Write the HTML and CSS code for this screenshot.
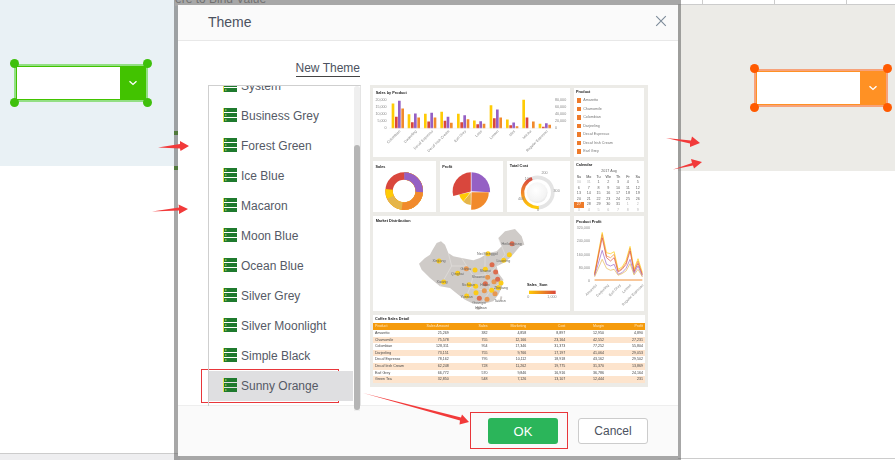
FILE: index.html
```html
<!DOCTYPE html>
<html lang="en">
<head>
<meta charset="utf-8">
<title>Theme</title>
<link rel="stylesheet" href="styles.css">
</head>
<body>
<div class="stage">
  <div class="panel panel-left"></div>
  <div class="panel panel-right"></div>
  <div class="ruler"><i></i><i></i><i></i></div>
  <div class="foot-left"></div>
  <div class="foot-right"></div>
  <span class="peek peek-a"></span>
  <span class="peek peek-b"></span>
  <div class="behind-clip"><span class="behind-text">ere to Bind Value</span></div>

  <div class="combo combo-green">
    <div class="combo-field"></div>
    <div class="combo-btn"><svg width="10" height="6" viewBox="0 0 10 6"><path d="M1.5 1.2 5 4.4l3.5-3.2" fill="none" stroke="#fff" stroke-width="1.4"/></svg></div>
    <span class="h tl"></span><span class="h tr"></span><span class="h bl"></span><span class="h br"></span>
  </div>
  <div class="combo combo-orange">
    <div class="combo-field"></div>
    <div class="combo-btn"><svg width="10" height="6" viewBox="0 0 10 6"><path d="M1.5 1.2 5 4.4l3.5-3.2" fill="none" stroke="#fff" stroke-width="1.4"/></svg></div>
    <span class="h tl"></span><span class="h tr"></span><span class="h bl"></span><span class="h br"></span>
  </div>

  <section class="modal">
    <header class="modal-head">
      <h1 class="modal-title">Theme</h1>
      <svg class="close" width="12" height="12" viewBox="0 0 12 12"><path d="M1.2 1.2l9.6 9.6M10.8 1.2l-9.6 9.6" stroke="#7c8b99" stroke-width="1.1" fill="none"/></svg>
    </header>
    <div class="modal-body">
      <div class="left-col">
        <div class="new-row"><a class="new-theme">New Theme</a></div>
        <div class="list">
          <div class="list-clip">
            <div class="row row-first"><svg class="ic" viewBox="0 0 14 14"><use href="#srv"/></svg>System</div>
            <div class="row"><svg class="ic" viewBox="0 0 14 14"><use href="#srv"/></svg>Business Grey</div>
            <div class="row"><svg class="ic" viewBox="0 0 14 14"><use href="#srv"/></svg>Forest Green</div>
            <div class="row"><svg class="ic" viewBox="0 0 14 14"><use href="#srv"/></svg>Ice Blue</div>
            <div class="row"><svg class="ic" viewBox="0 0 14 14"><use href="#srv"/></svg>Macaron</div>
            <div class="row"><svg class="ic" viewBox="0 0 14 14"><use href="#srv"/></svg>Moon Blue</div>
            <div class="row"><svg class="ic" viewBox="0 0 14 14"><use href="#srv"/></svg>Ocean Blue</div>
            <div class="row"><svg class="ic" viewBox="0 0 14 14"><use href="#srv"/></svg>Silver Grey</div>
            <div class="row"><svg class="ic" viewBox="0 0 14 14"><use href="#srv"/></svg>Silver Moonlight</div>
            <div class="row"><svg class="ic" viewBox="0 0 14 14"><use href="#srv"/></svg>Simple Black</div>
            <div class="row row-sel"><svg class="ic" viewBox="0 0 14 14"><use href="#srv"/></svg>Sunny Orange</div>
          </div>
          <div class="scroll"><div class="thumb"></div></div>
        </div>
      </div>

      <div class="preview">
        <div class="p-row p-row1">
          <div class="card card-main">
            <svg class="fill" viewBox="9 22 591 206">
              <text class="t" x="17" y="40">Sales by Product</text>
              <path fill="#ffcb05" d="M65 68h8V142h-8zM113 100h8V142h-8zM162 99h8V142h-8zM211 93h8V142h-8zM261 99h8V142h-8zM309 119h8V142h-8zM359 73h8V142h-8zM408 116h8V142h-8zM457 57h8V142h-8zM506 129h8V142h-8z"/>
              <path fill="#d9473d" d="M75 108h8V142h-8zM123 124h8V142h-8zM172 122h8V142h-8zM221 120h8V142h-8zM271 124h8V142h-8zM319 130h8V142h-8zM369 112h8V142h-8zM418 133h8V142h-8zM467 110h8V142h-8zM516 138h8V142h-8z"/>
              <path fill="#9560c4" d="M84 60h8V142h-8zM132 98h8V142h-8zM181 96h8V142h-8zM230 108h8V142h-8zM280 103h8V142h-8zM328 121h8V142h-8zM378 86h8V142h-8zM427 125h8V142h-8zM525 127h8V142h-8z"/>
              <path fill="#f18a2c" d="M94 83h8V142h-8zM142 110h8V142h-8zM191 110h8V142h-8zM240 126h8V142h-8zM290 115h8V142h-8zM338 129h8V142h-8zM388 110h8V142h-8zM437 136h8V142h-8zM486 122h8V142h-8zM535 132h8V142h-8z"/>
              <path stroke="#ddd" d="M58 142H548"/>
              <g class="ax" text-anchor="end">
                <text x="50" y="61">20,000</text><text x="50" y="82">15,000</text><text x="50" y="103">10,000</text><text x="50" y="124">5,000</text><text x="50" y="146">0</text>
              </g>
              <g class="ax">
                <text x="555" y="61">80,000</text><text x="555" y="82">60,000</text><text x="555" y="103">40,000</text><text x="555" y="124">20,000</text><text x="555" y="146">0</text>
              </g>
              <g class="ax" text-anchor="end">
                <text transform="translate(92 152) rotate(-45)">Colombian</text>
                <text transform="translate(141 152) rotate(-45)">Darjeeling</text>
                <text transform="translate(190 152) rotate(-45)">Decaf Espresso</text>
                <text transform="translate(239 152) rotate(-45)">Decaf Irish Cream</text>
                <text transform="translate(289 152) rotate(-45)">Earl Grey</text>
                <text transform="translate(337 152) rotate(-45)">Latte</text>
                <text transform="translate(387 152) rotate(-45)">Lemon</text>
                <text transform="translate(436 152) rotate(-45)">Mint</text>
                <text transform="translate(485 152) rotate(-45)">Mocha</text>
                <text transform="translate(534 152) rotate(-45)">Regular Espresso</text>
              </g>
            </svg>
          </div>
          <div class="card card-side">
            <div class="c-title">Product</div>
            <div class="chk"><i></i>Amaretto</div>
            <div class="chk"><i></i>Chamomile</div>
            <div class="chk"><i></i>Colombian</div>
            <div class="chk"><i></i>Darjeeling</div>
            <div class="chk"><i></i>Decaf Espresso</div>
            <div class="chk"><i></i>Decaf Irish Cream</div>
            <div class="chk"><i></i>Earl Grey</div>
          </div>
        </div>

        <div class="p-row p-row2">
          <div class="p-trio">
            <div class="card card-grow">
              <svg class="fill" viewBox="9 240 194 152">
                <text class="t" x="17" y="260">Sales</text>
                <g fill="none" stroke-width="23" transform="rotate(-90 105 330)">
                  <circle cx="105" cy="330" r="46.5" pathLength="100" stroke="#d9473d"/>
                  <circle cx="105" cy="330" r="46.5" pathLength="100" stroke="#ffcb05" stroke-dasharray="76.5 100"/>
                  <circle cx="105" cy="330" r="46.5" pathLength="100" stroke="#e5b54a" stroke-dasharray="68 100"/>
                  <circle cx="105" cy="330" r="46.5" pathLength="100" stroke="#f18a2c" stroke-dasharray="52 100"/>
                  <circle cx="105" cy="330" r="46.5" pathLength="100" stroke="#9560c4" stroke-dasharray="26 100"/>
                </g>
              </svg>
            </div>
            <div class="card card-grow">
              <svg class="fill" viewBox="215 240 190 152">
                <text class="t" x="222" y="260">Profit</text>
                <path fill="#9560c4" d="M310 330V273A57 57 0 0 1 366 333Z"/>
                <path fill="#f18a2c" d="M310 333H362A52 52 0 0 1 309 386Z"/>
                <path fill="#e5b54a" d="M308 334V372A38 38 0 0 1 285 362Z"/>
                <path fill="#ffcb05" d="M307 333 285 361A38 38 0 0 1 273 340Z"/>
                <path fill="#d9473d" d="M308 331 255 345A57 57 0 0 1 308 273Z"/>
              </svg>
            </div>
            <div class="card card-grow">
              <svg class="fill" viewBox="418 240 182 152">
                <defs>
                  <radialGradient id="gk" cx=".45" cy=".4" r=".7"><stop offset="0" stop-color="#fff"/><stop offset=".7" stop-color="#f4f4f4"/><stop offset="1" stop-color="#dcdcdc"/></radialGradient>
                  <linearGradient id="gy" x1="0" y1="0" x2="0" y2="1"><stop offset="0" stop-color="#d9473d"/><stop offset=".5" stop-color="#f18a2c"/><stop offset="1" stop-color="#ffcb05"/></linearGradient>
                </defs>
                <text class="t" x="423" y="257">Total Cost</text>
                <path d="M490 292A45 45 0 1 1 510 378.700" fill="none" stroke="#e4e4e4" stroke-width="11"/>
                <path d="M490 292A45 45 0 0 0 510 378.700" fill="none" stroke="url(#gy)" stroke-width="10"/>
                <circle cx="505" cy="334" r="31" fill="url(#gk)"/>
                <g class="ax" text-anchor="middle"><text x="477" y="298">100</text><text x="527" y="280">200</text><text x="563" y="331">300</text><text x="457" y="356">400</text><text x="508" y="390">0</text></g>
              </svg>
            </div>
          </div>
          <div class="card card-side">
            <div class="c-title">Calendar</div>
            <div class="cal-month">2017 Aug</div>
            <div class="cal">
              <b>Su</b><b>Mo</b><b>Tu</b><b>We</b><b>Th</b><b>Fr</b><b>Sa</b>
              <s>30</s><s>31</s><span>1</span><span>2</span><span>3</span><span>4</span><span>5</span>
              <span>6</span><span>7</span><span>8</span><span>9</span><span>10</span><span>11</span><span>12</span>
              <span>13</span><span>14</span><span>15</span><span>16</span><span>17</span><span>18</span><span>19</span>
              <span>20</span><span>21</span><span>22</span><span>23</span><span>24</span><span>25</span><span>26</span>
              <span class="cal-on">27</span><span>28</span><span>29</span><span>30</span><span>31</span><s>1</s><s>2</s>
              <s>3</s><s>4</s><s>5</s><s>6</s><s>7</s><s>8</s><s>9</s>
            </div>
          </div>
        </div>

        <div class="p-row p-row3">
          <div class="card card-main">
            <svg class="fill" viewBox="9 15 591 285">
              <defs><linearGradient id="lg"><stop offset="0" stop-color="#ffcb05"/><stop offset="1" stop-color="#d9473d"/></linearGradient></defs>
              <text class="t" x="17" y="34">Market Distribution</text>
              <path fill="#cfcbc8" d="M147 158 165 141 180 131 187 118 200 96 213 91 225 101 235 126 250 136 275 141 310 148 330 141 355 126 380 121 395 106 385 81 405 61 435 54 455 76 463 101 450 106 433 126 420 141 400 156 380 166 385 186 400 206 395 231 385 251 370 271 350 276 325 276 305 276 285 266 265 251 240 231 210 226 180 201 155 176Z"/>
              <path fill="#cfcbc8" d="M318 288l14-3 4 6-10 6-9-3zM392 255l5 2-3 14-5-5z"/>
              <path fill="none" stroke="#e8e6e4" stroke-width="1.500" d="M235 126 245 165 210 226M245 165 290 165 275 141M290 165 310 195 300 230 285 266M310 195 355 190 380 166M345 135 345 190M355 190 360 240 335 276M300 230 360 240 400 206M385 81 405 130 380 166"/>
              <g fill="#ffcb05" fill-opacity=".9">
                <circle cx="354" cy="128" r="7.500"/><circle cx="418" cy="131" r="7.500"/><circle cx="401" cy="148" r="7.500"/><circle cx="207" cy="150" r="7.500"/>
                <circle cx="315" cy="177" r="7.500"/><circle cx="346" cy="175" r="7.500"/><circle cx="263" cy="187" r="7.500"/><circle cx="221" cy="213" r="7.500"/>
                <circle cx="393" cy="216" r="7.500"/><circle cx="297" cy="221" r="7.500"/><circle cx="317" cy="226" r="7.500"/><circle cx="385" cy="230" r="7.500"/>
                <circle cx="365" cy="238" r="7.500"/><circle cx="318" cy="245" r="7.500"/><circle cx="290" cy="255" r="7.500"/>
              </g>
              <g fill="#e8944a" fill-opacity=".95">
                <circle cx="289" cy="173" r="7.500"/><circle cx="353" cy="199" r="7.500"/><circle cx="343" cy="239" r="7.500"/><circle cx="375" cy="248" r="7.500"/><circle cx="351" cy="265" r="7.500"/><circle cx="372" cy="212" r="7.500"/>
              </g>
              <g fill="#dc6648" fill-opacity=".95">
                <circle cx="426" cy="98" r="7.500"/><circle cx="366" cy="161" r="7.500"/><circle cx="377" cy="183" r="7.500"/><circle cx="383" cy="205" r="7.500"/><circle cx="346" cy="218" r="7.500"/><circle cx="328" cy="262" r="7.500"/>
              </g>
              <g class="ax dark" text-anchor="middle">
                <text x="425" y="103">Heilongjiang</text><text x="352" y="132">Nei Menggol</text><text x="400" y="152">Liaoning</text><text x="207" y="154">Xinjiang</text>
                <text x="288" y="177">Gansu</text><text x="262" y="192">Qinghai</text><text x="346" y="182">Shanxi</text><text x="325" y="202">Shaanxi</text>
                <text x="216" y="217">Xizang</text><text x="295" y="225">Sichuan</text><text x="345" y="226">Hubei</text><text x="393" y="233">Zhejiang</text>
                <text x="290" y="262">Yunnan</text><text x="327" y="279">Guangxi</text><text x="390" y="272">Taiwan</text><text x="333" y="294">Hainan</text>
              </g>
              <text class="t" x="471" y="225">Sales_Sum</text>
              <rect x="477" y="239" width="80" height="10" fill="url(#lg)"/>
              <g class="ax"><text x="472" y="261">0</text><text x="532" y="261">1,000</text></g>
            </svg>
          </div>
          <div class="card card-side">
            <svg class="fill" viewBox="612 15 211 285">
              <text class="t" x="619" y="34">Product Profit</text>
              <g class="ax" text-anchor="end">
                <text x="660" y="54">320,000</text><text x="660" y="94">240,000</text><text x="660" y="134">160,000</text><text x="660" y="174">80,000</text><text x="660" y="214">0</text>
              </g>
              <path d="M674 207H818" stroke="#f8c79a" stroke-width="6"/>
              <g fill="none" stroke-width="2">
                <polyline stroke="#ffcb05" points="674,187 697,64 710,125 722,128 733,122 745,175 757,168 769,148 781,106 793,175 805,143 818,185"/>
                <polyline stroke="#f18a2c" points="674,190 697,70 710,135 722,140 733,130 745,180 757,172 769,155 781,112 793,180 805,150 818,190"/>
                <polyline stroke="#d9473d" points="674,192 697,80 710,140 722,150 733,140 745,183 757,175 769,160 781,120 793,183 805,157 818,192"/>
                <polyline stroke="#9560c4" points="674,195 697,118 710,160 722,165 733,160 745,190 757,185 769,172 781,145 793,188 805,165 818,196"/>
                <polyline stroke="#e5b54a" points="674,198 697,145 710,172 722,178 733,175 745,193 757,188 769,180 781,158 793,192 805,175 818,198"/>
              </g>
              <g class="ax" text-anchor="end">
                <text transform="translate(682 224) rotate(-45)">Amaretto</text>
                <text transform="translate(718 224) rotate(-45)">Darjeeling</text>
                <text transform="translate(754 224) rotate(-45)">Earl Grey</text>
                <text transform="translate(785 224) rotate(-45)">Lemon</text>
                <text transform="translate(822 224) rotate(-45)">Regular Espresso</text>
              </g>
            </svg>
          </div>
        </div>

        <div class="card card-table">
          <div class="c-title c-title-t">Coffee Sales Detail</div>
          <table class="tbl">
            <thead><tr><th>Product</th><th>Sales Amount</th><th>Sales</th><th>Marketing</th><th>Cost</th><th>Margin</th><th>Profit</th></tr></thead>
            <tbody>
              <tr><td>Amaretto</td><td>25,269</td><td>382</td><td>4,858</td><td>8,897</td><td>12,950</td><td>4,890</td></tr>
              <tr><td>Chamomile</td><td>75,578</td><td>755</td><td>12,166</td><td>23,164</td><td>42,552</td><td>27,231</td></tr>
              <tr><td>Colombian</td><td>128,311</td><td>954</td><td>17,346</td><td>31,373</td><td>77,252</td><td>55,804</td></tr>
              <tr><td>Darjeeling</td><td>73,151</td><td>755</td><td>9,766</td><td>17,197</td><td>41,064</td><td>29,053</td></tr>
              <tr><td>Decaf Espresso</td><td>78,162</td><td>795</td><td>10,112</td><td>18,918</td><td>43,162</td><td>29,502</td></tr>
              <tr><td>Decaf Irish Cream</td><td>62,248</td><td>728</td><td>11,262</td><td>19,775</td><td>31,370</td><td>13,869</td></tr>
              <tr><td>Earl Grey</td><td>66,772</td><td>570</td><td>9,846</td><td>16,916</td><td>36,786</td><td>24,164</td></tr>
              <tr><td>Green Tea</td><td>32,850</td><td>548</td><td>7,126</td><td>13,107</td><td>12,444</td><td>231</td></tr>
            </tbody>
          </table>
        </div>
      </div>
    </div>
    <footer class="modal-foot">
      <button class="btn btn-ok">OK</button>
      <button class="btn btn-cancel">Cancel</button>
    </footer>
  </section>

  <svg class="marks" width="895" height="460" viewBox="0 0 895 460">
    <defs>
      <g id="srv">
        <path fill="#e6e24e" d="M0 0h1v14H0z"/>
        <path fill="#1f7a2e" d="M1 0h13v4H1zM1 5h13v4H1zM1 10h13v4H1z"/>
        <path fill="#e6e24e" d="M2 1.500h1.500v1H2zM2 6.500h1.500v1H2zM2 11.500h1.500v1H2z"/>
      </g>
    </defs>
    <g fill="#f23a3a">
      <path d="M158 147.500 180 144 180 141 189 146 180.500 151 180 148.500Z"/>
      <path d="M152 211.500 179 207.500 178.500 204.500 188 209 179 214 179 210.500Z"/>
      <path d="M666 138 691 140.500 692 136.500 700 143 690 147 690 143.500Z"/>
      <path d="M673 169.500 692 163 691 159 702 162 694 168.500 693 165.500Z"/>
      <path d="M363 393 461 417.500 462 414.500 469 422 459.500 424.500 460 420.500Z"/>
    </g>
    <g fill="none" stroke="#e8363a">
      <rect x="201.500" y="369.500" width="137" height="33"/>
      <rect x="470.500" y="412.500" width="97" height="36"/>
    </g>
  </svg>
</div>
</body>
</html>
```

FILE: styles.css
```css
* { box-sizing: border-box; }
html, body { margin: 0; padding: 0; background: #fff; }
body { font-family: "Liberation Sans", Arial, sans-serif; color: #555a66; }

.stage { position: relative; width: 895px; height: 460px; overflow: hidden; background: #fff; }

.panel { position: absolute; }
.panel-left { left: 0; top: 0; width: 180px; height: 166px; background: #e9f1f5; }
.panel-right { left: 678px; top: 5px; width: 217px; height: 166px; background: #ecebe7; }
.ruler { position: absolute; left: 678px; top: 0; width: 217px; height: 5px; border-bottom: 1px solid #ccc; }
.ruler i { position: absolute; top: 0; width: 1px; height: 4px; background: #ccc; }
.ruler i:nth-child(1) { left: 24px; }
.ruler i:nth-child(2) { left: 96px; }
.ruler i:nth-child(3) { left: 168px; }
.foot-left { position: absolute; left: 0; top: 453px; width: 180px; height: 7px; background: #eeeef0; border-top: 1px solid #ccc; }
.foot-right { position: absolute; left: 678px; top: 458px; width: 217px; height: 1px; background: #ccc; }
.peek { position: absolute; left: 174px; width: 5px; height: 4px; background: #3f9a10; }
.peek-a { top: 131px; }
.peek-b { top: 166px; }
.behind-clip { position: absolute; left: 175px; top: 0; width: 110px; height: 6px; overflow: hidden; background: #fff; }
.behind-text { display: block; margin-top: -8px; font-size: 12px; line-height: 14px; color: #888; white-space: nowrap; }

.combo { position: absolute; display: flex; width: 134px; height: 38px; border: 2px solid; }
.combo-field { flex: 1; background: #fff; border: 1px solid; border-right: 0; }
.combo-btn { width: 26px; display: flex; align-items: center; justify-content: center; }
.combo-green { left: 14px; top: 64px; border-color: #93df84; }
.combo-green .combo-field { border-color: #42c300; }
.combo-green .combo-btn { background: #42c300; }
.combo-green .h { background: #3fc00c; }
.combo-orange { left: 754px; top: 69px; border-color: #f7a27a; }
.combo-orange .combo-field { border-color: #ff9124; }
.combo-orange .combo-btn { background: #ff9124; }
.combo-orange .h { background: #ff5a00; }
.h { position: absolute; width: 9px; height: 9px; border-radius: 50%; }
.tl { left: -6px; top: -7px; }
.tr { right: -6px; top: -7px; }
.bl { left: -6px; bottom: -7px; }
.br { right: -6px; bottom: -7px; }

.modal {
  position: absolute; left: 174px; top: 0; width: 507px; height: 460px;
  display: flex; flex-direction: column;
  border-style: solid; border-width: 5px 3px 4px 4px;
  border-color: rgba(95, 95, 95, .55);
  background: #fff; background-clip: padding-box;
}
.modal-head {
  height: 36px; flex: none; display: flex; align-items: center; justify-content: space-between;
  padding: 0 11px 1px 30px; background: #fafafa; border-bottom: 1px solid #e8e8e8;
}
.modal-title { margin: 0; font-size: 14px; font-weight: 400; color: #4c5260; }
.close { display: block; margin-top: -2px; }

.modal-body { flex: 1; min-height: 0; display: flex; gap: 9px; padding-left: 30px; }
.left-col { width: 153px; display: flex; flex-direction: column; }
.new-row { height: 44px; padding-top: 20px; padding-right: 1px; display: flex; justify-content: flex-end; align-items: flex-start; }
.new-theme { font-size: 12px; line-height: 14px; color: #4c5260; border-bottom: 1px solid #444; padding-bottom: 1px; }

.list { position: relative; flex: 1; min-height: 0; display: flex; border: 1px solid #cfcfcf; border-bottom: 0; border-right-color: #e4e4e4; }
.list-clip { width: 144px; overflow: hidden; }
.row { height: 30px; display: flex; align-items: center; gap: 4px; padding-left: 14px; font-size: 12px; white-space: nowrap; }
.row-first { margin-top: -15px; }
.row-sel { background: #dfdfe1; }
.ic { width: 14px; height: 14px; flex: none; margin-bottom: 2px; }
.scroll { position: absolute; left: 145px; top: 0; width: 6px; height: 325px; background: #efefef; border-radius: 3px 3px 0 0; }
.thumb { position: absolute; left: 0; top: 59px; width: 6px; height: 265px; background: #b5b5b5; border-radius: 3px; }

.preview {
  width: 278px; height: 302px; margin-top: 44px; padding: 3px 3px 4px; background: #ecebe7;
  display: flex; flex-direction: column; gap: 4px; filter: blur(.45px);
  color: #444; font-size: 3.7px;
}
.p-row { display: flex; gap: 4px; }
.p-row1 { height: 69px; }
.p-row2 { height: 51px; }
.p-row3 { height: 95px; }
.card { background: #fff; overflow: hidden; }
.card-main { width: 197px; }
.card-side { width: 70px; }
.p-trio { width: 197px; display: flex; gap: 4px; }
.card-grow { flex: 1; }
.fill { display: block; width: 100%; height: 100%; }
.t { font-size: 11.500px; font-weight: 700; fill: #222; }
.ax { font-size: 11px; fill: #888; }
.dark { fill: #666; font-size: 11px; }

.c-title { height: 8px; line-height: 8px; padding-left: 2px; font-size: 3.800px; font-weight: 700; color: #222; }
.c-title-t { padding-left: 2px; }
.chk { height: 8.500px; display: flex; align-items: center; gap: 2px; padding-left: 2.700px; color: #777; }
.chk i { width: 4.500px; height: 4.500px; background: #ee7b2a; flex: none; }

.cal-month { height: 5.500px; line-height: 5.500px; text-align: center; color: #666; }
.cal { display: grid; grid-template-columns: repeat(7, 9.800px); grid-auto-rows: 5.500px; line-height: 5.500px; text-align: center; color: #666; }
.cal b { font-weight: 400; color: #444; }
.cal s { text-decoration: none; color: #bbb; }
.cal-on { background: #ee7b2a; color: #fff; }

.card-table { height: 68px; }
.tbl { width: 100%; border-collapse: collapse; table-layout: fixed; font-size: 3.600px; }
.tbl th, .tbl td { padding: 0 2px; text-align: right; font-weight: 400; white-space: nowrap; overflow: hidden; }
.tbl th:first-child, .tbl td:first-child { text-align: left; }
.tbl th { height: 7px; line-height: 7px; background: #f59b0c; color: #ffe6bf; }
.tbl td { height: 6.600px; line-height: 6.600px; color: #444; }
.tbl tbody tr:nth-child(even) td { background: #fde4cd; }

.modal-foot {
  height: 51px; flex: none; display: flex; justify-content: flex-end; align-items: flex-start; gap: 20px;
  padding: 12px 30px 0 0; background: #fafafa; border-top: 1px solid #eeeeee; margin-top: -1px; position: relative;
}
.list, .scroll { z-index: 1; }
.btn { width: 70px; height: 26px; border-radius: 3px; font: 12px "Liberation Sans", Arial, sans-serif; padding: 0; }
.btn-ok { background: #2bb55a; border: 0; color: #fff; font-size: 13px; }
.btn-cancel { background: #fff; border: 1px solid #ccc; color: #4c5260; }

.marks { position: absolute; left: 0; top: 0; pointer-events: none; }
```
